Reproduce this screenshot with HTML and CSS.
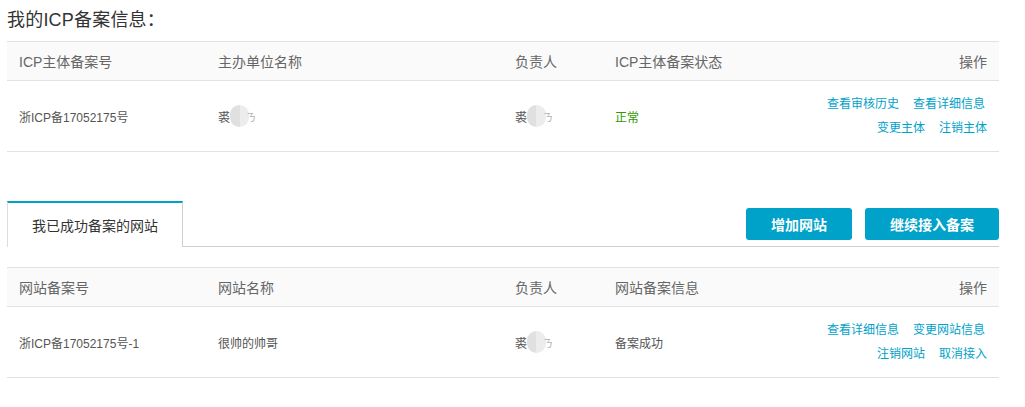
FILE: index.html
```html
<!DOCTYPE html>
<html lang="zh-CN">
<head>
<meta charset="utf-8">
<title>我的ICP备案信息</title>
<link rel="stylesheet" href="styles.css">
</head>
<body>
<div class="page">
  <h1 class="title">我的ICP备案信息：</h1>
  <table class="grid">
    <colgroup><col class="c1"><col class="c2"><col class="c3"><col class="c4"><col class="c5"></colgroup>
    <thead>
      <tr><th>ICP主体备案号</th><th>主办单位名称</th><th>负责人</th><th>ICP主体备案状态</th><th class="right">操作</th></tr>
    </thead>
    <tbody>
      <tr>
        <td>浙ICP备17052175号</td>
        <td><span class="name">裘<span class="blob"></span><span class="faint">ㄋ</span></span></td>
        <td><span class="name">裘<span class="blob"></span><span class="faint">ㄋ</span></span></td>
        <td class="ok">正常</td>
        <td class="right">
          <div class="ops"><a>查看审核历史</a><a>查看详细信息</a></div>
          <div class="ops"><a>变更主体</a><a>注销主体</a></div>
        </td>
      </tr>
    </tbody>
  </table>

  <div class="tabbar">
    <div class="tab">我已成功备案的网站</div>
    <div class="actions">
      <button class="btn">增加网站</button>
      <button class="btn">继续接入备案</button>
    </div>
  </div>

  <table class="grid second">
    <colgroup><col class="c1"><col class="c2"><col class="c3"><col class="c4"><col class="c5"></colgroup>
    <thead>
      <tr><th>网站备案号</th><th>网站名称</th><th>负责人</th><th>网站备案信息</th><th class="right">操作</th></tr>
    </thead>
    <tbody>
      <tr>
        <td>浙ICP备17052175号-1</td>
        <td>很帅的帅哥</td>
        <td><span class="name">裘<span class="blob"></span><span class="faint">ㄋ</span></span></td>
        <td>备案成功</td>
        <td class="right">
          <div class="ops"><a>查看详细信息</a><a>变更网站信息</a></div>
          <div class="ops"><a>注销网站</a><a>取消接入</a></div>
        </td>
      </tr>
    </tbody>
  </table>
</div>
</body>
</html>
```
FILE: styles.css
```css
* { box-sizing: border-box; }
body {
  margin: 0;
  background: #fff;
  font-family: "Liberation Sans", Arial, "Noto Sans CJK SC", sans-serif;
  color: #555;
}
.page {
  width: 999px;
  padding-left: 7px;
}
.title {
  margin: 0;
  padding-top: 8px;
  height: 41px;
  font-size: 18px;
  line-height: 24px;
  font-weight: normal;
  color: #333;
  letter-spacing: 0.2px;
}
.grid {
  width: 992px;
  border-collapse: collapse;
  table-layout: fixed;
}
.c1 { width: 199px; }
.c2 { width: 297px; }
.c3 { width: 100px; }
.c4 { width: 200px; }
.grid th {
  height: 39px;
  background: #fafafa;
  border-top: 1px solid #e2e2e2;
  border-bottom: 1px solid #e2e2e2;
  font-size: 14px;
  font-weight: normal;
  color: #666;
  text-align: left;
  padding: 0 12px;
}
.grid td {
  height: 71px;
  border-bottom: 1px solid #e2e2e2;
  font-size: 12px;
  color: #555;
  padding: 0 12px;
  vertical-align: middle;
}
.grid .right { text-align: right; }
.grid td.ok { color: #339900; }
.ops {
  display: flex;
  justify-content: flex-end;
  gap: 14px;
  line-height: 24px;
}
.ops:first-child { margin-right: 2px; }
.ops a {
  color: #00a2ca;
  cursor: pointer;
}
.name {
  display: inline-flex;
  align-items: center;
}
.blob {
  display: inline-block;
  width: 19px;
  height: 22px;
  border-radius: 10px;
  background: linear-gradient(90deg, #e0e0e0 0 50%, #ececec 50% 100%);
  margin-left: 0;
}
.faint {
  color: #b0b0b0;
  font-size: 10px;
  margin-left: -3px;
}
.tabbar {
  margin-top: 49px;
  width: 992px;
  height: 46px;
  display: flex;
  justify-content: space-between;
  align-items: flex-start;
  border-bottom: 1px solid #d0d0d0;
}
.tab {
  width: 176px;
  height: 46px;
  border-top: 2px solid #00a2ca;
  border-left: 1px solid #dddddd;
  border-right: 1px solid #d0d0d0;
  background: #fff;
  font-size: 14px;
  color: #333;
  display: flex;
  align-items: center;
  justify-content: center;
  position: relative;
  z-index: 1;
}
.actions {
  display: flex;
  gap: 13px;
  margin-top: 7px;
}
.btn {
  height: 32px;
  padding: 0 25px;
  border: none;
  border-radius: 3px;
  background: #00a2ca;
  color: #fff;
  font-family: "Liberation Sans", Arial, "Noto Sans CJK SC", sans-serif;
  font-size: 14px;
  font-weight: bold;
}
.second { margin-top: 20px; }
```
